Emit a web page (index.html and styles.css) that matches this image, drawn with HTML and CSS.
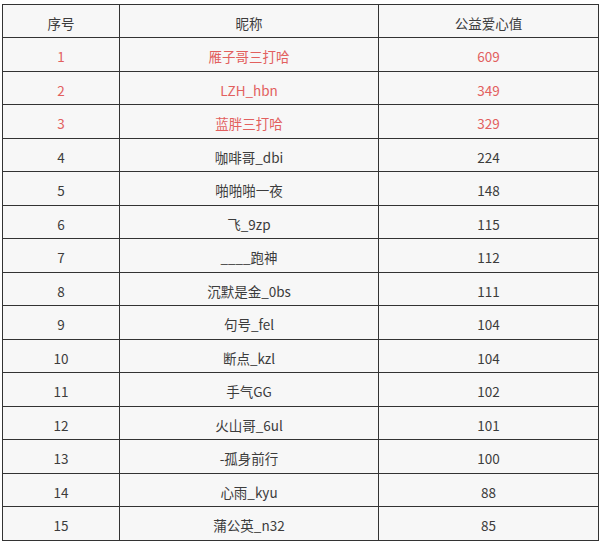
FILE: index.html
```html
<!DOCTYPE html>
<html lang="zh">
<head>
<meta charset="utf-8">
<link rel="stylesheet" href="styles.css">
</head>
<body>
<table class="rank">
  <colgroup><col class="c1"><col class="c2"><col class="c3"></colgroup>
  <thead>
    <tr><th>序号</th><th>昵称</th><th>公益爱心值</th></tr>
  </thead>
  <tbody>
    <tr class="top"><td>1</td><td>雁子哥三打哈</td><td>609</td></tr>
    <tr class="top"><td>2</td><td>LZH_hbn</td><td>349</td></tr>
    <tr class="top"><td>3</td><td>蓝胖三打哈</td><td>329</td></tr>
    <tr><td>4</td><td>咖啡哥_dbi</td><td>224</td></tr>
    <tr><td>5</td><td>啪啪啪一夜</td><td>148</td></tr>
    <tr><td>6</td><td>飞_9zp</td><td>115</td></tr>
    <tr><td>7</td><td>____跑神</td><td>112</td></tr>
    <tr><td>8</td><td>沉默是金_0bs</td><td>111</td></tr>
    <tr><td>9</td><td>句号_fel</td><td>104</td></tr>
    <tr><td>10</td><td>断点_kzl</td><td>104</td></tr>
    <tr><td>11</td><td>手气GG</td><td>102</td></tr>
    <tr><td>12</td><td>火山哥_6ul</td><td>101</td></tr>
    <tr><td>13</td><td>-孤身前行</td><td>100</td></tr>
    <tr><td>14</td><td>心雨_kyu</td><td>88</td></tr>
    <tr><td>15</td><td>蒲公英_n32</td><td>85</td></tr>
  </tbody>
</table>
</body>
</html>
```
FILE: styles.css
```css
html, body {
  margin: 0;
  padding: 0;
  background: #ffffff;
}
body {
  padding: 4px 2px 0 2px;
}
.rank {
  border-collapse: collapse;
  width: 596px;
  background: #f7f7f7;
  font-family: "Noto Sans CJK SC", "Noto Sans", sans-serif;
  font-size: 13.5px;
  color: #3c3c3c;
  table-layout: fixed;
}
.c1 { width: 117px; }
.c2 { width: 259px; }
.c3 { width: 220px; }
.rank th, .rank td {
  border: 1px solid #333333;
  height: 29px;
  padding: 3px 0 0 0;
  text-align: center;
  vertical-align: middle;
  font-weight: normal;
  line-height: 16px;
}
.rank tbody tr:nth-child(odd) td { height: 30px; }
.rank tr.top td {
  color: #e2605e;
}
```
